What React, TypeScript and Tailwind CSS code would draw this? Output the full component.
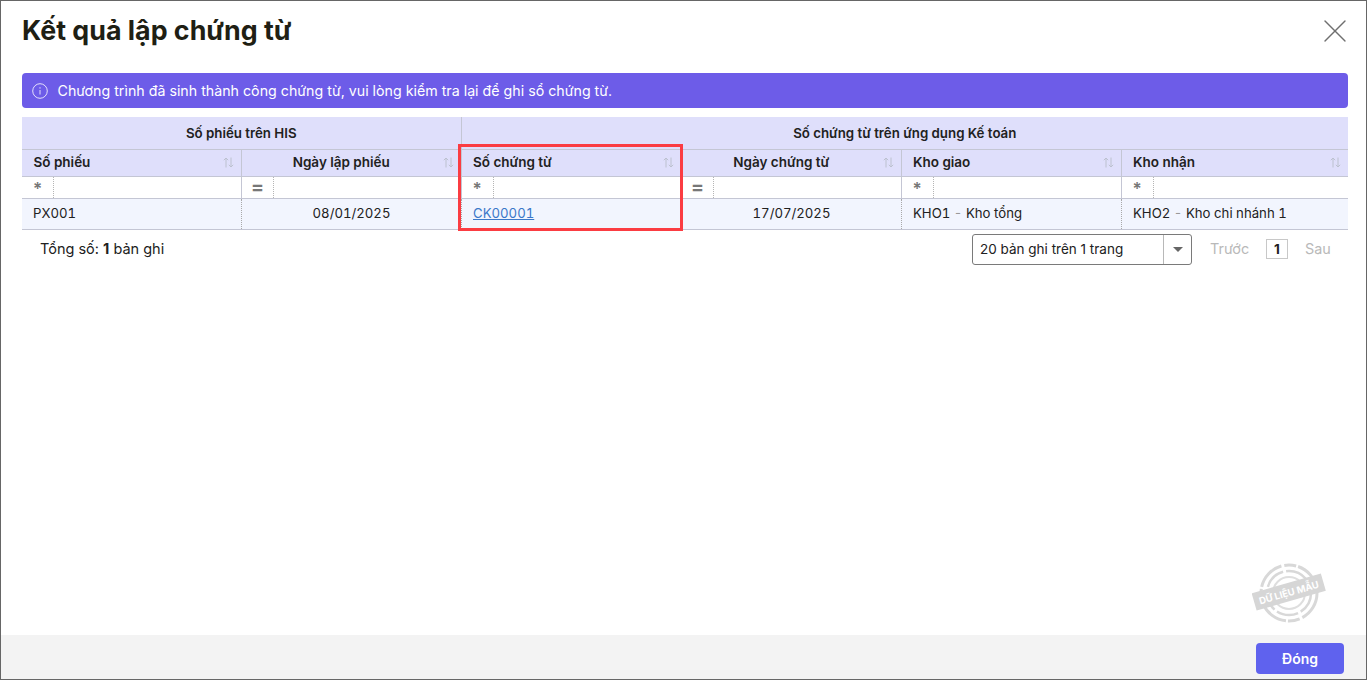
import { X } from 'lucide-react';

const columns = [
  { title: 'Số phiếu', op: '*', center: false },
  { title: 'Ngày lập phiếu', op: '=', center: true },
  { title: 'Số chứng từ', op: '*', center: false },
  { title: 'Ngày chứng từ', op: '=', center: true },
  { title: 'Kho giao', op: '*', center: false },
  { title: 'Kho nhận', op: '*', center: false },
];

function SortIcon() {
  return (
    <svg width="11" height="11" viewBox="0 0 11 11" fill="none" stroke="#bcc1cf" strokeWidth="1" className="shrink-0">
      <path d="M3 10.5V1M0.8 3.2L3 1l2.2 2.2" />
      <path d="M8 0.5V10M5.8 7.8L8 10l2.2-2.2" />
    </svg>
  );
}

function Stamp() {
  return (
    <svg width="74" height="62" viewBox="0 0 74 62" className="absolute left-[1251px] top-[561px]">
      <circle cx="37" cy="31" r="28" fill="none" stroke="#d8d8d8" strokeWidth="3" strokeDasharray="30 3 12 2" />
      <circle cx="37" cy="31" r="22" fill="none" stroke="#d8d8d8" strokeWidth="2.5" strokeDasharray="22 3" />
      <circle cx="37" cy="31" r="16" fill="none" stroke="#dedede" strokeWidth="2" />
      <g transform="rotate(-16 37 31)">
        <rect x="1" y="21" width="72" height="18" fill="#d6d6d6" />
        <text x="37" y="34" textAnchor="middle" fill="#ffffff" fontSize="9.5" fontWeight="700" fontFamily="Inter, sans-serif">
          DỮ LIỆU MẪU
        </text>
      </g>
    </svg>
  );
}

export default function App() {
  return (
    <div className="relative flex h-[680px] w-[1367px] flex-col overflow-hidden border border-[#666666] bg-white font-['Inter',sans-serif] text-[13.2px] text-[#212121]">
      {/* Title */}
      <div className="flex h-[72px] shrink-0 items-start justify-between pl-[21px] pr-[11px] pt-[13px]">
        <h1 className="text-[26.8px] font-bold leading-[32px] text-[#1f1f14]">Kết quả lập chứng từ</h1>
        <X size={40} strokeWidth={0.8} className="-mt-[3px] text-[#6f6f6f]" />
      </div>

      {/* Body */}
      <div className="flex min-h-0 flex-1 flex-col pl-[21px] pr-[18px]">
        <div className="flex h-[35px] shrink-0 items-center gap-[9.5px] rounded-[4px] bg-[#6d5ce8] px-[10px] text-[14.22px] text-white">
          <svg width="16" height="16" viewBox="0 0 16 16" fill="none" stroke="#e4e0fb" strokeWidth="1">
            <circle cx="8" cy="8" r="7.3" />
            <path d="M8 7v4.5M8 4.2v1.4" />
          </svg>
          <span>Chương trình đã sinh thành công chứng từ, vui lòng kiểm tra lại để ghi sổ chứng từ.</span>
        </div>

        <table className="mt-[9px] w-[1326px] table-fixed border-collapse">
          <colgroup>
            <col className="w-[219px]" />
            <col className="w-[220px]" />
            <col className="w-[220px]" />
            <col className="w-[220px]" />
            <col className="w-[220px]" />
            <col className="w-[227px]" />
          </colgroup>
          <thead>
            <tr className="h-[32px] border-b border-[#c4c6d4] bg-[#dfdffb] text-[13.3px] font-semibold">
              <th colSpan={2} className="border-r border-[#c4c6d4] pt-[2px] font-semibold">Số phiếu trên HIS</th>
              <th colSpan={4} className="pt-[2px] font-semibold">Số chứng từ trên ứng dụng Kế toán</th>
            </tr>
            <tr className="h-[27px] border-b border-[#c4c6d4] bg-[#dfdffb] text-[13.5px]">
              {columns.map((col, i) => (
                <th key={col.title} className={`p-0 font-semibold ${i < 5 ? 'border-r border-[#c4c6d4]' : ''}`}>
                  <div className="flex items-center pl-[11.5px] pr-[7px]">
                    <span className={`flex-1 ${col.center ? 'pr-[13px] text-center' : 'text-left'}`}>{col.title}</span>
                    <SortIcon />
                  </div>
                </th>
              ))}
            </tr>
            <tr className="h-[22px] border-b border-[#c4c6d4] bg-white">
              {columns.map((col, i) => (
                <th key={col.title} className={`p-0 font-normal ${i < 5 ? 'border-r border-[#c4c6d4]' : ''}`}>
                  <div className="flex h-[21px] items-center">
                    <span
                      className={`flex h-full w-[32px] items-center justify-center border-r border-dotted border-[#b5b5b5] font-semibold leading-none text-[#777777] ${
                        col.op === '*' ? 'pt-[5px] text-[17px]' : 'pl-[1px] text-[20px]'
                      }`}
                    >
                      {col.op}
                    </span>
                  </div>
                </th>
              ))}
            </tr>
          </thead>
          <tbody>
            <tr className="h-[31px] border-b border-[#c4c6d4] bg-[#f2f5fe] tabular-nums">
              <td className="border-r border-dotted border-[#a9a9a9] pl-[11px]">PX001</td>
              <td className="border-r border-dotted border-[#a9a9a9] pl-[1px] text-center">08/01/2025</td>
              <td className="border-r border-dotted border-[#a9a9a9] pl-[11.5px]">
                <a className="text-[#3b78c9] underline">CK00001</a>
              </td>
              <td className="border-r border-dotted border-[#a9a9a9] pl-[1px] text-center">17/07/2025</td>
              <td className="border-r border-dotted border-[#a9a9a9] pl-[11.5px]">
                KHO1 <span className="text-[#999999]">-</span> Kho tổng
              </td>
              <td className="pl-[11.5px]">
                KHO2 <span className="text-[#999999]">-</span> Kho chi nhánh 1
              </td>
            </tr>
          </tbody>
        </table>

        {/* Pagination */}
        <div className="mt-[4px] flex w-[1326px] items-center justify-between pl-[18px] pr-[17px]">
          <span className="text-[14.5px]">
            Tổng số: <b className="font-bold">1</b> bản ghi
          </span>
          <div className="flex items-center">
            <div className="flex h-[31px] w-[220px] items-center rounded-[3px] border border-[#7a7a7a]">
              <span className="flex-1 pl-[7px] text-[13.5px]">20 bản ghi trên 1 trang</span>
              <span className="flex h-full w-[28px] items-center justify-center border-l border-[#b8b8b8]">
                <span className="h-0 w-0 border-x-[5px] border-t-[5px] border-x-transparent border-t-[#666666]" />
              </span>
            </div>
            <span className="ml-[18px] w-[39px] text-[14.4px] text-[#b9b9b9]">Trước</span>
            <span className="ml-[17px] flex h-[20px] w-[22px] items-center justify-center border border-[#c8c8c8] text-[13.5px] font-bold">1</span>
            <span className="ml-[17px] w-[26px] text-[14.4px] text-[#b9b9b9]">Sau</span>
          </div>
        </div>
      </div>

      {/* Footer */}
      <div className="flex h-[44px] shrink-0 items-start justify-end bg-[#f3f3f3] pr-[22px] pt-[8px]">
        <button className="h-[31px] w-[88px] rounded-[4px] bg-[#5f62ee] text-[14px] font-semibold text-white">Đóng</button>
      </div>

      {/* Annotation + watermark */}
      <div className="absolute left-[457px] top-[143px] h-[87px] w-[225px] border-[3px] border-[#fb3c42]" />
      <Stamp />
    </div>
  );
}
